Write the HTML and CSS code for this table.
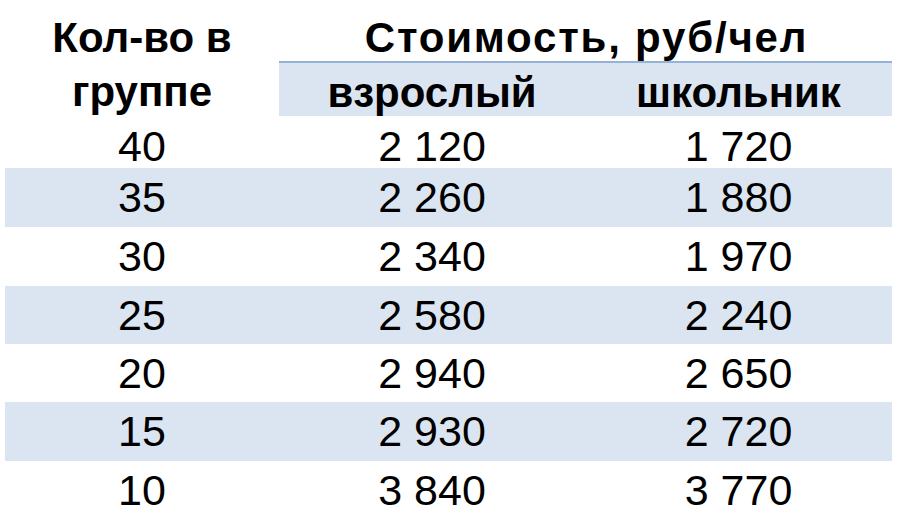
FILE: index.html
```html
<!DOCTYPE html>
<html lang="ru">
<head>
<meta charset="utf-8">
<title>Стоимость</title>
<link rel="stylesheet" href="styles.css">
</head>
<body>
<div class="price-table">
  <div class="cell head-qty">Кол-во в<br>группе</div>
  <div class="cell head-cost">Стоимость, руб/чел</div>
  <div class="cell head-sub">взрослый</div>
  <div class="cell head-sub">школьник</div>

  <div class="cell num first">40</div><div class="cell num first">2 120</div><div class="cell num first">1 720</div>
  <div class="cell num alt">35</div><div class="cell num alt">2 260</div><div class="cell num alt">1 880</div>
  <div class="cell num">30</div><div class="cell num">2 340</div><div class="cell num">1 970</div>
  <div class="cell num alt">25</div><div class="cell num alt">2 580</div><div class="cell num alt">2 240</div>
  <div class="cell num">20</div><div class="cell num">2 940</div><div class="cell num">2 650</div>
  <div class="cell num alt">15</div><div class="cell num alt">2 930</div><div class="cell num alt">2 720</div>
  <div class="cell num">10</div><div class="cell num">3 840</div><div class="cell num">3 770</div>
</div>
</body>
</html>
```
FILE: styles.css
```css
html, body {
  margin: 0;
  padding: 0;
  background: #ffffff;
}

body {
  padding-left: 5px;
  font-family: "Liberation Sans", Arial, sans-serif;
  color: #000000;
}

.price-table {
  display: grid;
  grid-template-columns: 274px 306px 307px;
  grid-template-rows: 63px 53px 52px 59px 59px 58px 58px 59px 58px;
}

.cell {
  display: flex;
  align-items: center;
  justify-content: center;
  box-sizing: border-box;
}

.head-qty {
  grid-row: 1 / span 2;
  display: block;
  text-align: center;
  font-weight: bold;
  font-size: 42px;
  line-height: 54px;
  padding-top: 11px;
}

.head-cost {
  grid-column: 2 / span 2;
  font-weight: bold;
  font-size: 42px;
  letter-spacing: 1.8px;
  padding-top: 14px;
  padding-left: 2px;
  border-bottom: 2px solid #95b3d7;
}

.head-sub {
  background: #dbe5f1;
  font-weight: bold;
  font-size: 42px;
  padding-top: 6px;
}

.num {
  font-size: 43px;
  padding-top: 0;
}

.num.first {
  padding-top: 8px;
}

.alt {
  background: #dbe5f1;
}
```
